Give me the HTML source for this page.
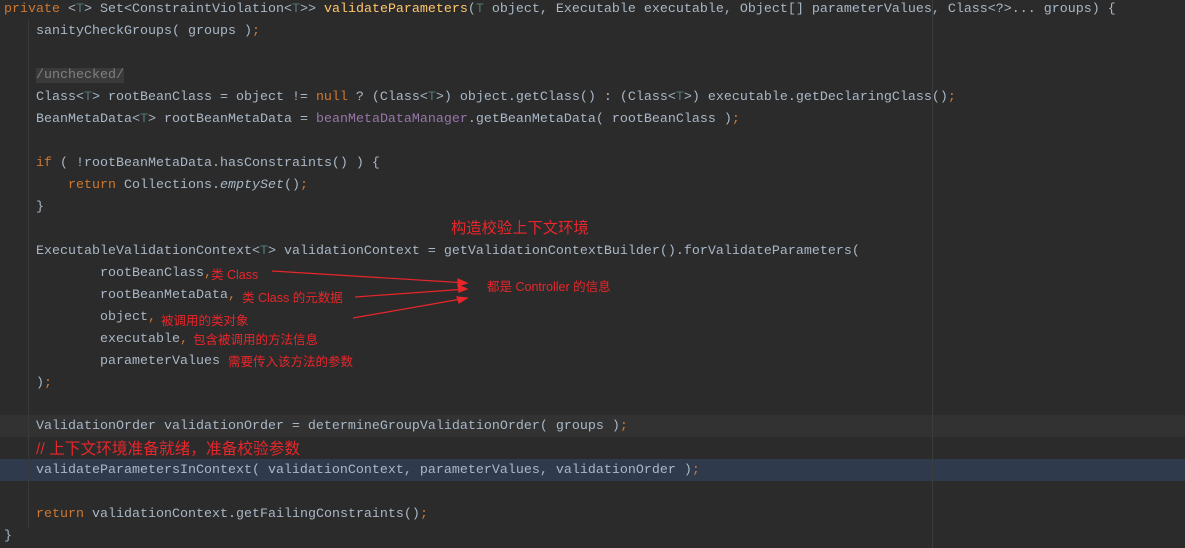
<!DOCTYPE html>
<html><head><meta charset="utf-8"><style>
body{margin:0;width:1185px;height:548px;background:#2b2b2b;overflow:hidden;position:relative;font-family:"Liberation Mono",monospace;font-size:13.33px;color:#a9b7c6}
.l{position:absolute;left:4px;height:22px;line-height:22px;white-space:pre;width:1181px}
.k{color:#cc7832}.m{color:#ffc66d}.t{color:#507874}.f{color:#9876aa}.i{font-style:italic}
.r{position:absolute;color:#e8262b;font-family:"Liberation Sans","Noto Sans CJK SC",sans-serif;white-space:nowrap}
.g{position:absolute;top:19px;width:1px;background:#393939}
</style></head><body>
<div style="position:absolute;left:0;top:415px;width:1185px;height:22px;background:#323232"></div>
<div style="position:absolute;left:0;top:459px;width:1185px;height:22px;background:#2f3b4d"></div>
<div style="position:absolute;left:932px;top:0;width:1px;height:548px;background:#3c3c3c"></div>
<div class="g" style="left:28px;height:510px"></div>
<div class="l" style="top:-1px"><span class="k">private</span> &lt;<span class="t">T</span>&gt; Set&lt;ConstraintViolation&lt;<span class="t">T</span>&gt;&gt; <span class="m">validateParameters</span>(<span class="t">T</span> object, Executable executable, Object[] parameterValues, Class&lt;?&gt;... groups) {</div>
<div class="l" style="top:21px">    sanityCheckGroups( groups )<span class="k">;</span></div>
<div class="l" style="top:65px">    <span style="color:#808080;background:#3a3a3a">/unchecked/</span></div>
<div class="l" style="top:87px">    Class&lt;<span class="t">T</span>&gt; rootBeanClass = object != <span class="k">null</span> ? (Class&lt;<span class="t">T</span>&gt;) object.getClass() : (Class&lt;<span class="t">T</span>&gt;) executable.getDeclaringClass()<span class="k">;</span></div>
<div class="l" style="top:109px">    BeanMetaData&lt;<span class="t">T</span>&gt; rootBeanMetaData = <span class="f">beanMetaDataManager</span>.getBeanMetaData( rootBeanClass )<span class="k">;</span></div>
<div class="l" style="top:153px">    <span class="k">if</span> ( !rootBeanMetaData.hasConstraints() ) {</div>
<div class="l" style="top:175px">        <span class="k">return</span> Collections.<span class="i">emptySet</span>()<span class="k">;</span></div>
<div class="l" style="top:197px">    }</div>
<div class="l" style="top:241px">    ExecutableValidationContext&lt;<span class="t">T</span>&gt; validationContext = getValidationContextBuilder().forValidateParameters(</div>
<div class="l" style="top:263px">            rootBeanClass<span class="k">,</span></div>
<div class="l" style="top:285px">            rootBeanMetaData<span class="k">,</span></div>
<div class="l" style="top:307px">            object<span class="k">,</span></div>
<div class="l" style="top:329px">            executable<span class="k">,</span></div>
<div class="l" style="top:351px">            parameterValues</div>
<div class="l" style="top:373px">    )<span class="k">;</span></div>
<div class="l" style="top:416px">    ValidationOrder validationOrder = determineGroupValidationOrder( groups )<span class="k">;</span></div>
<div class="l" style="top:460px">    validateParametersInContext( validationContext, parameterValues, validationOrder )<span class="k">;</span></div>
<div class="l" style="top:504px">    <span class="k">return</span> validationContext.getFailingConstraints()<span class="k">;</span></div>
<div class="l" style="top:526px">}</div>
<div class="r" style="left:36px;top:436px;font-size:15.7px">// 上下文环境准备就绪，准备校验参数</div>
<div class="r" style="left:451px;top:216px;font-size:15.3px">构造校验上下文环境</div>
<div class="r" style="left:211px;top:264px;font-size:12.5px">类 Class</div>
<div class="r" style="left:242px;top:287px;font-size:12.5px">类 Class 的元数据</div>
<div class="r" style="left:161px;top:310px;font-size:12.5px">被调用的类对象</div>
<div class="r" style="left:193px;top:329px;font-size:12.5px">包含被调用的方法信息</div>
<div class="r" style="left:228px;top:351px;font-size:12.5px">需要传入该方法的参数</div>
<div class="r" style="left:487px;top:276px;font-size:12.5px">都是 Controller 的信息</div>
<svg style="position:absolute;left:0;top:0" width="1185" height="548">
<g stroke="#e8262b" stroke-width="1.2" fill="#e8262b">
<line x1="272" y1="271" x2="467" y2="283"/><polygon points="467,283 458,279 458,286"/>
<line x1="355" y1="297" x2="467" y2="289"/><polygon points="467,289 458,285 459,292"/>
<line x1="353" y1="318" x2="467" y2="298"/><polygon points="467,298 457,297 459,303"/>
</g></svg>
</body></html>
